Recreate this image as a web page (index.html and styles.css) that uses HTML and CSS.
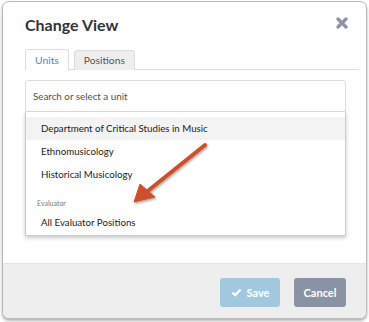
FILE: index.html
```html
<!DOCTYPE html>
<html>
<head>
<meta charset="utf-8">
<link rel="stylesheet" href="styles.css">
</head>
<body>
<div class="modal">
  <div class="modal-header">
    <h1 class="title">Change View</h1>
    <button class="close" aria-label="Close">
      <svg width="12" height="12" viewBox="0 0 12 12"><path d="M2 2L10 10M10 2L2 10" stroke="#8a93a4" stroke-width="3.2" stroke-linecap="round"/></svg>
    </button>
  </div>
  <div class="modal-body">
    <ul class="tabs">
      <li class="tab active">Units</li>
      <li class="tab">Positions</li>
    </ul>
    <div class="select">
      <div class="search">Search or select a unit</div>
      <div class="dropdown">
        <div class="item hover">Department of Critical Studies in Music</div>
        <div class="item">Ethnomusicology</div>
        <div class="item">Historical Musicology</div>
        <div class="group">Evaluator</div>
        <div class="item">All Evaluator Positions</div>
      </div>
    </div>
  </div>
  <div class="modal-footer">
    <button class="btn save">
      <svg width="11" height="9" viewBox="0 0 11 9"><path d="M1.5 4.6L4.2 7.2L9.5 1.6" fill="none" stroke="#fff" stroke-width="2.2"/></svg>
      Save
    </button>
    <button class="btn cancel">Cancel</button>
  </div>
</div>
<svg class="arrow" width="369" height="322" viewBox="0 0 369 322">
  <defs>
    <filter id="sh" x="-20%" y="-20%" width="140%" height="140%">
      <feDropShadow dx="1" dy="1.5" stdDeviation="1.2" flood-color="#000" flood-opacity="0.35"/>
    </filter>
  </defs>
  <g filter="url(#sh)" fill="#cf5029" stroke="#cf5029">
    <line x1="205" y1="145" x2="144" y2="194" stroke-width="4" stroke-linecap="round"/>
    <polygon points="134,202 140,184 155,197" stroke-width="1" stroke-linejoin="round"/>
  </g>
</svg>
</body>
</html>
```
FILE: styles.css
```css
* { box-sizing: border-box; }
html, body { margin: 0; padding: 0; background: #fff; }
body {
  font-family: Lato, "Open Sans", sans-serif;
  width: 369px;
  height: 322px;
  overflow: hidden;
  position: relative;
}
.modal {
  margin: 1px 2px 0 2px;
  width: 365px;
  height: 318px;
  border: 1px solid #b9b9b9;
  border-radius: 7px;
  box-shadow: 0 2px 3px rgba(0,0,0,0.3);
  background: #fff;
  display: flex;
  flex-direction: column;
  overflow: hidden;
}
.modal-header {
  display: flex;
  justify-content: space-between;
  align-items: flex-start;
  padding: 13px 18px 0 22px;
}
.title {
  margin: 0;
  font-size: 16px;
  line-height: 20px;
  font-weight: 700;
  color: #333;
}
.close {
  border: 0;
  background: none;
  padding: 0;
  margin-top: 2px;
  width: 12px;
  height: 12px;
  display: block;
}
.close svg { display: block; }
.modal-body {
  flex: 1;
  padding: 14px 7px 0 22px;
}
.tabs {
  list-style: none;
  margin: 0;
  padding: 0;
  display: flex;
  gap: 5px;
  border-bottom: 1px solid #ddd;
  height: 21px;
}
.tab {
  font-size: 10.3px;
  line-height: 19px;
  padding: 0 9px;
  height: 20px;
  margin-top: 1px;
  border: 1px solid #ddd;
  border-bottom: 0;
  border-radius: 3px 3px 0 0;
  background: #eee;
  color: #555;
}
.tab.active {
  background: #fff;
  color: #4a8bb7;
  margin-top: 0;
  height: 21px;
  line-height: 20px;
}
.select {
  margin: 10px 13px 0 0;
}
.search {
  height: 32px;
  border: 1px solid #ddd;
  border-radius: 3px 3px 0 0;
  padding: 0 7px;
  font-size: 9.8px;
  line-height: 31px;
  color: #505050;
}
.dropdown {
  border: 1px solid #ccc;
  border-top: 0;
  box-shadow: 0 2px 4px rgba(0,0,0,0.22);
  background: #fff;
  padding: 5px 0 1px;
}
.item {
  font-size: 9.7px;
  line-height: 23px;
  padding: 0 15px;
  color: #1a1a1a;
}
.item.hover { background: #f3f3f3; }
.group {
  font-size: 7px;
  color: #777;
  line-height: 12px;
  padding: 11px 11px 2px;
}
.modal-footer {
  height: 55px;
  background: #eee;
  border-top: 1px solid #e5e5e5;
  display: flex;
  justify-content: flex-end;
  align-items: flex-start;
  gap: 14px;
  padding: 14px 20px 0 0;
}
.btn {
  border: 0;
  border-radius: 3px;
  height: 29px;
  color: #fff;
  font-family: Lato, sans-serif;
  font-size: 11px;
  font-weight: 700;
  display: flex;
  align-items: center;
  justify-content: center;
  gap: 5px;
}
.save { width: 60px; background: #a2c8df; }
.cancel { width: 52px; background: #8a93a4; }
.arrow {
  position: absolute;
  left: 0;
  top: 0;
  pointer-events: none;
}
```
